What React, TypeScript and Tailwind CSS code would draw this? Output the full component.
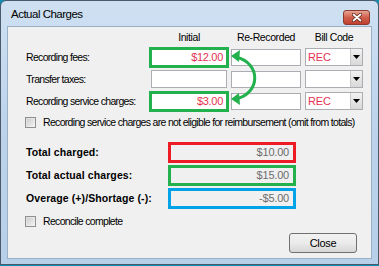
import React from "react";

const RED = "#e5334f";

const TextBox = ({ value = "", red = false }: { value?: string; red?: boolean }) => (
  <div
    className="h-[18px] w-[76px] mx-[2px] bg-white border border-[#abadb3] flex items-center justify-end pr-[3px]"
    style={{ color: red ? RED : "#000" }}
  >
    {value}
  </div>
);

const GreenBox = ({ value }: { value: string }) => (
  <div className="h-[21px] w-[80px] border-[3px] border-[#22b14c] bg-white flex items-center justify-end pr-[3px] text-[11px] tracking-[-0.3px] text-[#e5334f]">
    {value}
  </div>
);

const Combo = ({ value = "" }: { value?: string }) => (
  <div className="h-[18px] w-[58px] bg-white border border-[#abadb3] flex items-stretch">
    <div className="flex-1 flex items-center pl-[2px] text-[11px] tracking-[-0.2px] text-[#e5334f]">{value}</div>
    <div className="w-[12px] border-l border-[#c9c9c9] bg-gradient-to-b from-[#f2f2f2] to-[#d8d8d8] flex items-center justify-center">
      <svg width="7" height="4" viewBox="0 0 7 4">
        <path d="M0 0H7L3.5 4Z" fill="#000" />
      </svg>
    </div>
  </div>
);

const CheckBox = () => (
  <div className="w-[11px] h-[11px] shrink-0 border border-[#8e8f8f] bg-gradient-to-br from-[#dcdcdc] to-[#f6f6f6] p-[1px]">
    <div className="w-full h-full bg-gradient-to-br from-[#cfcfcf] to-[#f0f0f0]" />
  </div>
);

const Row = ({ label, initial, combo }: { label: string; initial: React.ReactNode; combo: string }) => (
  <div className="flex items-center h-[22px]">
    <div className="w-[141px] pl-[18px] whitespace-nowrap">{label}</div>
    <div className="w-[80px] flex items-center justify-center">{initial}</div>
    <div className="ml-[2px] w-[70px] h-[17px] bg-white border border-[#abadb3]" />
    <div className="ml-[4px]">
      <Combo value={combo} />
    </div>
  </div>
);

const TotalRow = ({ label, value, color }: { label: string; value: string; color: string }) => (
  <div className="flex items-center h-[23px]">
    <div className="w-[160px] pl-[18px] font-bold tracking-[0.1px] whitespace-nowrap">{label}</div>
    <div
      className="w-[128px] h-[21px] border-[3px] bg-[#f0f0f0] flex items-center justify-end pr-[4px] text-[11px] tracking-[-0.2px] text-[#6d6d6d]"
      style={{ borderColor: color }}
    >
      {value}
    </div>
  </div>
);

export default function App() {
  return (
    <div
      className="w-[379px] h-[266px] bg-[#0e8fb3] text-black overflow-hidden"
      style={{ fontFamily: '"Liberation Sans", Arial, sans-serif' }}
    >
      <div className="w-[379px] h-[265px] rounded-t-[6px] border border-[#4a5a6b] bg-gradient-to-b from-[#cfe0f2] via-[#bcd3eb] to-[#b7cfe8] flex flex-col">
        <div className="h-[25px] shrink-0 flex items-center justify-between pl-[10px] pr-[8px]">
          <span className="text-[11.5px] tracking-[-0.5px] mt-[2px]">Actual Charges</span>
          <div className="mt-[7px] w-[27px] h-[15px] rounded-[3px] border border-[#8a3a2e] bg-gradient-to-b from-[#e8a493] via-[#cf5f4c] to-[#c0402c] flex items-center justify-center">
            <svg width="10" height="9" viewBox="0 0 10 9">
              <path d="M1.5 1.5L8.5 7.5M8.5 1.5L1.5 7.5" stroke="#5a1e14" strokeWidth="3.2" strokeLinecap="round" />
              <path d="M1.5 1.5L8.5 7.5M8.5 1.5L1.5 7.5" stroke="#fff" strokeWidth="1.8" strokeLinecap="round" />
            </svg>
          </div>
        </div>
        <div className="relative ml-[6px] w-[365px] h-[233px] shrink-0 bg-[#f0f0f0] border border-[#9ab0c7] flex flex-col text-[10.5px] tracking-[-0.68px] leading-none">
          <div className="flex h-[18px] shrink-0 items-center mt-[1px] tracking-[-0.4px]">
            <div className="w-[141px]" />
            <div className="w-[80px] text-center">Initial</div>
            <div className="ml-[2px] w-[70px] text-center whitespace-nowrap">Re-Recorded</div>
            <div className="ml-[4px] w-[58px] text-center whitespace-nowrap">Bill Code</div>
          </div>
          <div>
            <Row label="Recording fees:" initial={<GreenBox value="$12.00" />} combo="REC" />
            <Row label="Transfer taxes:" initial={<TextBox />} combo="" />
            <Row label="Recording service charges:" initial={<GreenBox value="$3.00" />} combo="REC" />
          </div>
          <div className="flex items-center h-[13px] gap-[7px] pl-[17px] mt-[4px]">
            <CheckBox />
            <span className="whitespace-nowrap">Recording service charges are not eligible for reimbursement (omit from totals)</span>
          </div>
          <div className="mt-[12px]">
            <TotalRow label="Total charged:" value="$10.00" color="#ed1c24" />
            <TotalRow label="Total actual charges:" value="$15.00" color="#22b14c" />
            <TotalRow label="Overage (+)/Shortage (-):" value="-$5.00" color="#00a2e8" />
          </div>
          <div className="flex items-center h-[13px] gap-[7px] pl-[17px] mt-[5px]">
            <CheckBox />
            <span className="whitespace-nowrap">Reconcile complete</span>
          </div>
          <div className="flex justify-end pr-[14px] mt-[5px]">
            <button className="w-[68px] h-[20px] rounded-[3px] border border-[#707070] bg-gradient-to-b from-[#f2f2f2] via-[#ebebeb] to-[#d6d6d6] text-[11px] tracking-[-0.3px]">
              Close
            </button>
          </div>
          <svg className="absolute left-0 top-0" width="365" height="233" viewBox="0 0 365 233">
            <path d="M228 30 C253 36, 253 66, 228 72" fill="none" stroke="#22b14c" strokeWidth="3" />
            <path d="M223 29 L232 23 L231 35 Z" fill="#22b14c" />
            <path d="M223 72 L231 66 L232 78 Z" fill="#22b14c" />
          </svg>
        </div>
      </div>
    </div>
  );
}
